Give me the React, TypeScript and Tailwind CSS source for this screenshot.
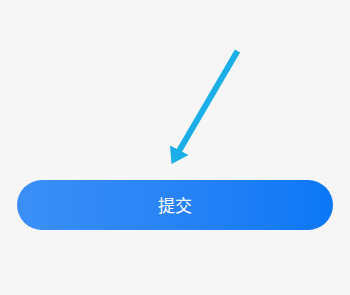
import React from 'react';

export default function App() {
  return (
    <div className="w-[350px] h-[295px] bg-[#f6f6f6] flex flex-col overflow-hidden">
      <svg width="350" height="180" viewBox="0 0 350 180" className="block shrink-0">
        <line x1="237.5" y1="51" x2="179" y2="151" stroke="#1aafe6" strokeWidth="6" strokeLinecap="butt" />
        <polygon points="170,145.5 171.5,164 188.5,155" fill="#1aafe6" />
      </svg>
      <button
        type="button"
        className="mx-[17px] h-[50px] rounded-full bg-gradient-to-r from-[#3b8ff7] to-[#0a77f6] text-white text-[17px] flex items-center justify-center"
        style={{ fontFamily: '"Noto Sans CJK SC", "Liberation Sans", sans-serif' }}
      >
        提交
      </button>
    </div>
  );
}
